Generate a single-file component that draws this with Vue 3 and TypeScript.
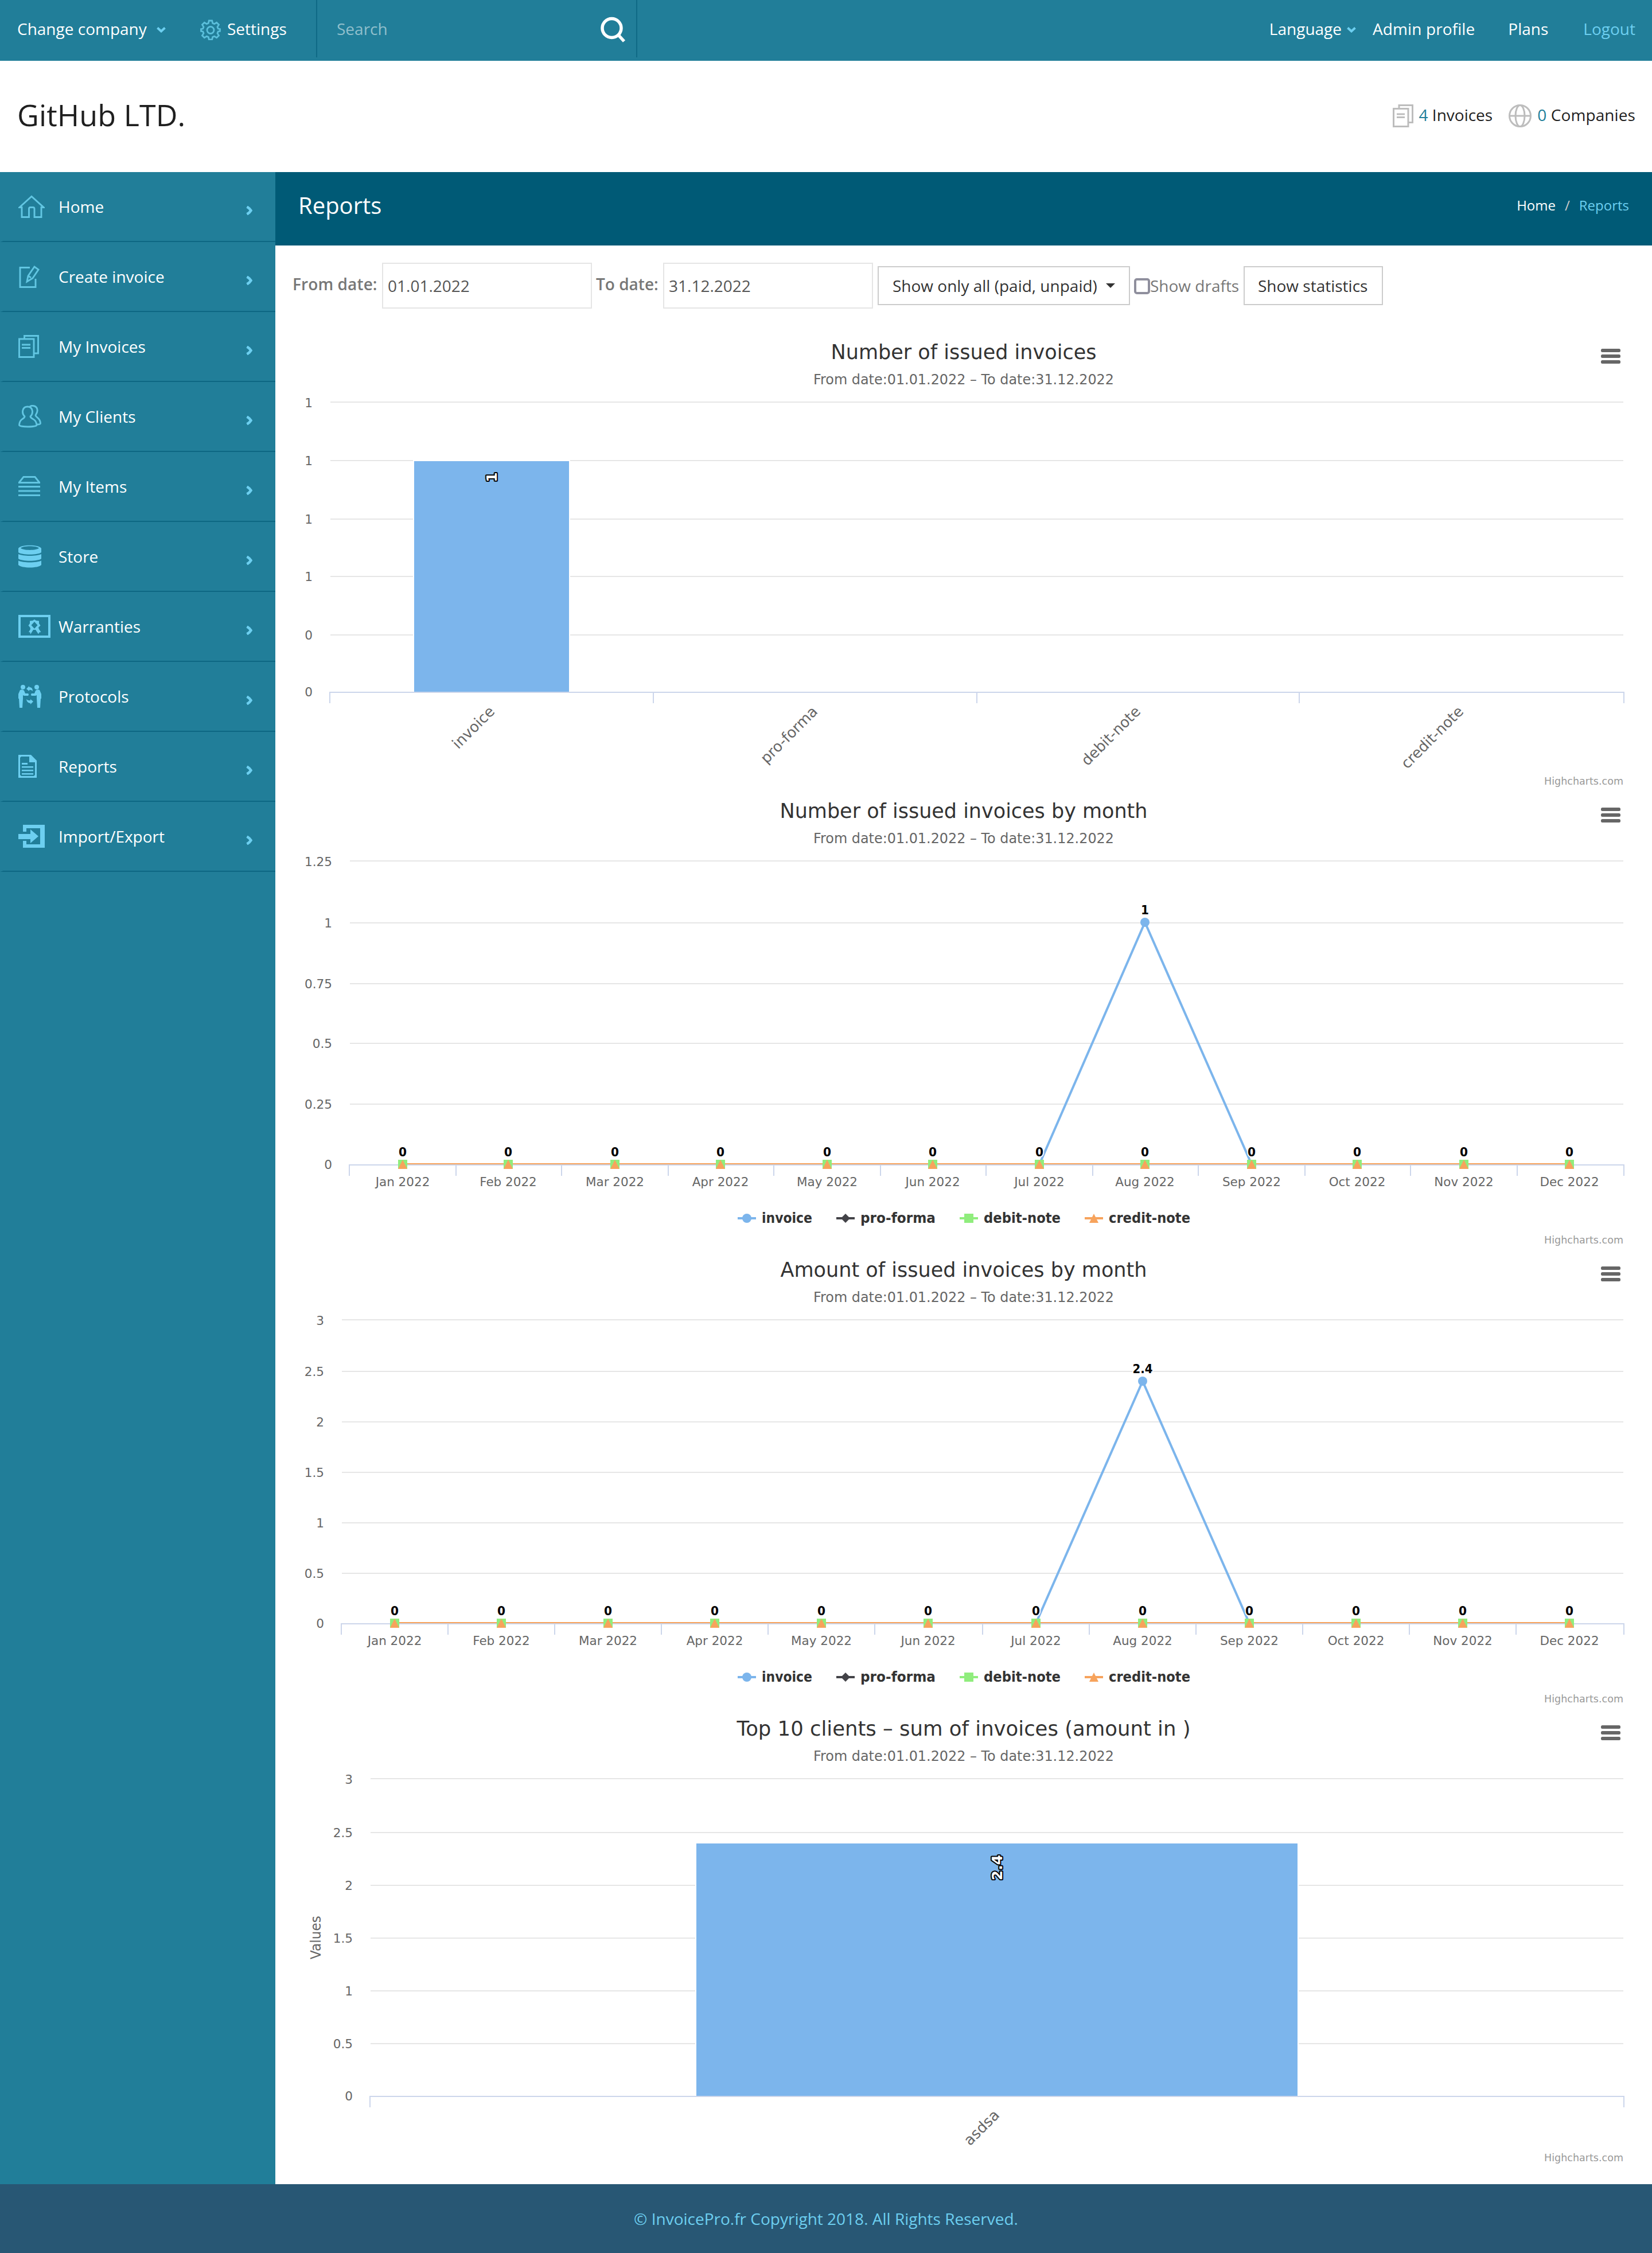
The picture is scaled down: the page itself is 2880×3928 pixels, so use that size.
<script setup lang="ts">
interface MenuItem { icon: string; label: string }
interface Tick { y: number; text: string }
interface Bar { x: number; y: number; w: number; h: number; label: string; lx: number; ly: number }
interface Category { x: number; y: number; text: string }
interface Chart {
  title: string
  titleWidth: number
  left: number
  bottom: number
  ticks: Tick[]
  xTicks: number[]
  kind: 'bar' | 'line'
  bar?: Bar
  categories?: Category[]
  points?: number[]
  peak?: string
  yTitle?: string
}

const menu: MenuItem[] = [
  { icon: 'home', label: 'Home' },
  { icon: 'create', label: 'Create invoice' },
  { icon: 'invoices', label: 'My Invoices' },
  { icon: 'clients', label: 'My Clients' },
  { icon: 'items', label: 'My Items' },
  { icon: 'store', label: 'Store' },
  { icon: 'warranties', label: 'Warranties' },
  { icon: 'protocols', label: 'Protocols' },
  { icon: 'reports', label: 'Reports' },
  { icon: 'import', label: 'Import/Export' },
]

const months = ['Jan', 'Feb', 'Mar', 'Apr', 'May', 'Jun', 'Jul', 'Aug', 'Sep', 'Oct', 'Nov', 'Dec'].map((m) => `${m} 2022`)
const PEAK_MONTH = 7
const PEAK_Y = 230
const RIGHT = 2320

const ticks = (ys: number[], labels: string[]): Tick[] => ys.map((y, i) => ({ y, text: labels[i] }))

// Month positions snap to whole units of a half-resolution grid
function monthPoints(left: number): number[] {
  const step = (RIGHT - left) / 24
  return months.map((_, i) => 2 * Math.floor(left / 2 + step * (i + 0.5)))
}
function monthTicks(left: number): number[] {
  const step = (RIGHT - left) / 24
  return Array.from({ length: 13 }, (_, i) => (i === 12 ? RIGHT + 1 : 2 * Math.round(left / 2 + step * i) - 1))
}

const charts: Chart[] = [
  {
    title: 'Number of issued invoices', titleWidth: 463, left: 66, bottom: 628, kind: 'bar',
    ticks: ticks([123, 225, 327, 427, 529, 629], ['1', '1', '1', '1', '0', '0']),
    xTicks: [65, 629, 1193, 1755, 2321],
    bar: { x: 211, y: 225, w: 272, h: 404, label: '1', lx: 356, ly: 254 },
    categories: [
      { x: 354, y: 664, text: 'invoice' },
      { x: 917, y: 664, text: 'pro-forma' },
      { x: 1480, y: 664, text: 'debit-note' },
      { x: 2043, y: 664, text: 'credit-note' },
    ],
  },
  {
    title: 'Number of issued invoices by month', titleWidth: 641, left: 100, bottom: 652, kind: 'line',
    ticks: ticks([123, 231, 337, 441, 547, 653], ['1.25', '1', '0.75', '0.5', '0.25', '0']),
    xTicks: monthTicks(100), points: monthPoints(100), peak: '1',
  },
  {
    title: 'Amount of issued invoices by month', titleWidth: 639, left: 86, bottom: 652, kind: 'line',
    ticks: ticks([123, 213, 301, 389, 477, 565, 653], ['3', '2.5', '2', '1.5', '1', '0.5', '0']),
    xTicks: monthTicks(86), points: monthPoints(86), peak: '2.4',
  },
  {
    title: 'Top 10 clients – sum of invoices (amount in )', titleWidth: 791, left: 136, bottom: 676, kind: 'bar',
    ticks: ticks([123, 217, 309, 401, 493, 585, 677], ['3', '2.5', '2', '1.5', '1', '0.5', '0']),
    xTicks: [135, 2321],
    bar: { x: 703, y: 235, w: 1050, h: 442, label: '2.4', lx: 1237, ly: 278 },
    categories: [{ x: 1234, y: 711, text: 'asdsa' }],
    yTitle: 'Values',
  },
]

const legend = [
  { x: 776, w: 88, text: 'invoice', color: '#7cb5ec', shape: 'circle' },
  { x: 948, w: 131, text: 'pro-forma', color: '#434348', shape: 'diamond' },
  { x: 1163, w: 134, text: 'debit-note', color: '#90ed7d', shape: 'square' },
  { x: 1381, w: 142, text: 'credit-note', color: '#f7a35c', shape: 'triangle' },
]

function invoicePath(c: Chart): string {
  return 'M' + c.points!.map((x, i) => `${x} ${i === PEAK_MONTH ? PEAK_Y : c.bottom}`).join('L')
}
</script>

<template>
  <div class="page">
    <header class="topbar">
      <div class="top-left">
        <span class="company">Change company</span>
        <svg class="chev" width="16" height="10" viewBox="0 0 16 10"><path d="M1.500 1.500L8 7.500L14.500 1.500" /></svg>
        <svg class="gear" width="36" height="36" viewBox="0 0 36 36">
          <path d="M15.300 2h5.400l1 4.400 3 1.300 4-2.500 3.800 3.800-2.500 4 1.300 3 3.200.7v3.600l-3.200.7-1.300 3 2.500 4-3.800 3.800-4-2.500-3 1.300-1 4.400h-5.400l-1-4.400-3-1.300-4 2.500L3.500 28l2.500-4-1.300-3L1.500 20.300v-3.600L4.700 16l1.300-3-2.500-4 3.800-3.800 4 2.500 3-1.300z" />
          <circle cx="18" cy="18.500" r="6" />
        </svg>
        <span class="settings">Settings</span>
        <div class="search">
          <span>Search</span>
          <svg width="44" height="46" viewBox="0 0 44 46"><circle cx="19.500" cy="20" r="16.500" /><path d="M31 32L41 43" /></svg>
        </div>
      </div>
      <nav class="top-right">
        <span>Language</span>
        <svg class="chev" width="16" height="10" viewBox="0 0 16 10"><path d="M1.500 1.500L8 7.500L14.500 1.500" /></svg>
        <span class="admin">Admin profile</span>
        <span class="plans">Plans</span>
        <span class="logout">Logout</span>
      </nav>
    </header>

    <section class="brand">
      <h1>GitHub LTD.</h1>
      <div class="counts">
        <svg width="36" height="40" viewBox="0 0 36 40">
          <path d="M11 6V1.500H34.500V31.500H28M1.500 7.500H27V38.500H1.500zM7 17H21M7 22.500H21" />
        </svg>
        <span class="inv"><b>4</b> Invoices</span>
        <svg width="40" height="40" viewBox="0 0 40 40">
          <circle cx="20" cy="20" r="18.500" /><ellipse cx="20" cy="20" rx="8" ry="18.500" /><path d="M1.500 20H38.500" />
        </svg>
        <span class="comp"><b>0</b> Companies</span>
      </div>
    </section>

    <div class="body">
      <aside class="sidebar">
        <div v-for="m in menu" :key="m.label" class="item">
          <span class="icon">
            <svg v-if="m.icon === 'home'" width="46" height="40" viewBox="0 0 46 40">
              <path d="M2 21L23 2L44 21H40V38H28V23.500Q28 21 25.500 21H21Q18.500 21 18.500 23.500V38H6V21z" transform="translate(0 .5)" />
            </svg>
            <svg v-else-if="m.icon === 'create'" width="38" height="40" viewBox="0 0 38 40">
              <path d="M20 4.500H3V38.500H30V24M15 29L17 19L28 3L35 8L25 23zM17 19L22 22" />
            </svg>
            <svg v-else-if="m.icon === 'invoices'" width="36" height="40" viewBox="0 0 36 40">
              <path d="M10.500 6V1.500H34.500V32H28M1.500 7H27V38.500H1.500zM6 17H21M6 22.500H21" />
            </svg>
            <svg v-else-if="m.icon === 'clients'" width="40" height="40" viewBox="0 0 40 40">
              <path d="M11 20C5 14 7 3 16 3S27 14 21 20C21 25 31 23 32 35C32 39 1.500 39 1.500 35C2 23 11 25 11 20zM20 3C23 0 32 1 33 8C34 13 31 15 30 18C30 22 38 22 38.500 32C38.500 34 36 34 33 34" />
            </svg>
            <svg v-else-if="m.icon === 'items'" width="38" height="40" viewBox="0 0 38 40">
              <path d="M1.500 13L9 3.500H29L36.500 13M0 13.500H38M0 20.500H38M0 28H38M0 35.500H38" />
            </svg>
            <svg v-else-if="m.icon === 'store'" class="fill" width="40" height="40" viewBox="0 0 40 40">
              <path fill-rule="evenodd" d="M0 6C4-1 36-1 40 6V13C34 18 6 18 0 13zM4 5.500C8 10 32 10 36 5.500C32 1 8 1 4 5.500z" />
              <path d="M0 16C8 20 32 20 40 16V24C34 29 6 29 0 24zM0 27.500C8 31.500 32 31.500 40 27.500V35C34 41 6 41 0 35z" />
            </svg>
            <svg v-else-if="m.icon === 'warranties'" class="fill" width="56" height="40" viewBox="0 0 56 40">
              <path fill-rule="evenodd" d="M0 0H56V40H0zM4 4V36H52V4z" />
              <path fill-rule="evenodd" d="M28 8L31 10L36 10.500L36 15L38.500 18.500L35 22L36 25L39.500 30L36.500 30.500L35 33.500L30 26H26L21 34L20.500 30.500L18 30L21 25L20.500 22L17.500 18.500L20 15V10.500L25 10zM28 12L22.500 18L28 24L33.500 18z" />
            </svg>
            <svg v-else-if="m.icon === 'protocols'" class="fill" width="40" height="40" viewBox="0 0 40 40">
              <circle cx="8" cy="4" r="4" /><circle cx="32" cy="4" r="4" />
              <path d="M3 9Q7 7 10 10L12 15H17Q19 17 17 19H10L8 18V24L7 40H2L1 24H0V16zM37 9Q33 7 30 10L28 15H23Q21 17 23 19H30L32 18V24L33 40H38L39 24H40V16z" />
              <path d="M14 7L19 2V4Q25 4 25 11Q22 8 19 9V11zM26 29L21 34V32Q15 32 14 25Q17 28 21 27V25z" />
            </svg>
            <svg v-else-if="m.icon === 'reports'" class="fill" width="32" height="40" viewBox="0 0 32 40">
              <path fill-rule="evenodd" d="M0 0H22L32 10V40H0zM5 3L3 5V35L5 37H27L29 35V13H19V3z" />
              <path d="M6 14H16V17H6zM6 20H26V22.500H6zM6 26H26V28.500H6zM6 32H26V34.500H6z" />
            </svg>
            <svg v-else class="fill" width="46" height="40" viewBox="0 0 46 40">
              <path d="M8 0H46V40H8V28H14V34H38V6H14V12H8zM0 16H21V8L35 20L21 32V25H0z" />
            </svg>
          </span>
          <span class="label">{{ m.label }}</span>
          <svg class="arrow" width="11" height="16" viewBox="0 0 11 16"><path d="M1.500 1.500Q6 4 8.500 8Q6 12 1.500 14.500" /></svg>
        </div>
      </aside>

      <main class="content">
        <div class="pagehead">
          <h2>Reports</h2>
          <div class="crumbs"><span>Home</span><i>/</i><em>Reports</em></div>
        </div>
        <div class="filters">
          <label class="from">From date:</label>
          <div class="field">01.01.2022</div>
          <label class="to">To date:</label>
          <div class="field">31.12.2022</div>
          <div class="btn select">Show only all (paid, unpaid)<span class="caret"></span></div>
          <span class="check"></span>
          <span class="drafts">Show drafts</span>
          <div class="btn stats">Show statistics</div>
        </div>

        <svg v-for="(c, ci) in charts" :key="ci" class="chart" width="2340" height="800" viewBox="0 0 2340 800">
          <clipPath :id="`plot${ci}`"><rect :x="c.left" y="100" :width="RIGHT - c.left" :height="c.bottom - 100" /></clipPath>
          <text class="title" x="1170" y="48" :textLength="c.titleWidth" lengthAdjust="spacingAndGlyphs">{{ c.title }}</text>
          <text class="subtitle" x="1170" y="92" textLength="524" lengthAdjust="spacingAndGlyphs">From date:01.01.2022 – To date:31.12.2022</text>
          <g class="burger">
            <rect v-for="y in [30, 40, 50]" :key="y" x="2281" :y="y" width="34" height="6" rx="2.500" />
          </g>

          <g v-for="(t, ti) in c.ticks" :key="ti">
            <rect v-if="ti < c.ticks.length - 1" class="grid" :x="c.left" :y="t.y - 1" :width="RIGHT - c.left" height="2" />
            <text class="ylabel" :x="c.left - 31" :y="t.y + (ti === 0 ? 9 : ti === c.ticks.length - 1 ? 7 : 8)">{{ t.text }}</text>
          </g>
          <text v-if="c.yTitle" class="ytitle" transform="translate(49 400) rotate(-90)" textLength="76" lengthAdjust="spacingAndGlyphs">{{ c.yTitle }}</text>

          <rect v-if="c.bar" class="bar" :x="c.bar.x" :y="c.bar.y" :width="c.bar.w" :height="c.bar.h" />

          <rect class="axis" :x="c.left - 2" :y="c.bottom" :width="RIGHT + 4 - c.left" height="2" />
          <rect v-for="x in c.xTicks" :key="x" class="axis" :x="x - 1" :y="c.bottom" width="2" height="20" />

          <template v-if="c.kind === 'bar'">
            <text class="barlabel" :transform="`translate(${c.bar!.lx} ${c.bar!.ly}) rotate(-90)`">{{ c.bar!.label }}</text>
            <text v-for="k in c.categories" :key="k.text" class="category" :transform="`translate(${k.x} ${k.y}) rotate(-45)`">{{ k.text }}</text>
          </template>

          <template v-else>
            <g :clip-path="`url(#plot${ci})`" class="lines">
              <path :d="invoicePath(c)" stroke="#7cb5ec" />
              <path :d="`M${c.points![0]} ${c.bottom}H${c.points![11]}`" stroke="#f7a35c" />
            </g>
            <circle :cx="c.points![PEAK_MONTH]" :cy="PEAK_Y" r="8" fill="#7cb5ec" />
            <g v-for="(x, i) in c.points" :key="x">
              <rect :x="x - 8" :y="c.bottom - 8" width="16" height="16" fill="#90ed7d" />
              <path :d="`M${x} ${c.bottom - 8}l8 16h-16z`" fill="#f7a35c" />
              <text class="point" :x="x" :y="c.bottom - 14" textLength="14" lengthAdjust="spacingAndGlyphs">0</text>
              <text class="xlabel" :x="x" :y="c.bottom + 38">{{ months[i] }}</text>
            </g>
            <text class="point" :x="c.points![PEAK_MONTH]" :y="PEAK_Y - 14" :textLength="c.peak === '1' ? 14 : 35" lengthAdjust="spacingAndGlyphs">{{ c.peak }}</text>
            <g v-for="l in legend" :key="l.text">
              <rect :x="l.x" y="744" width="32" height="4" :fill="l.color" />
              <circle v-if="l.shape === 'circle'" :cx="l.x + 16" cy="746" r="8" :fill="l.color" />
              <path v-else-if="l.shape === 'diamond'" :d="`M${l.x + 16} 738l8 8l-8 8l-8-8z`" :fill="l.color" />
              <rect v-else-if="l.shape === 'square'" :x="l.x + 8" y="738" width="16" height="16" :fill="l.color" />
              <path v-else :d="`M${l.x + 16} 738l8 16h-16z`" :fill="l.color" />
              <text class="legend" :x="l.x + 42" y="754" :textLength="l.w" lengthAdjust="spacingAndGlyphs">{{ l.text }}</text>
            </g>
          </template>
          <text class="credit" x="2320" y="790" textLength="138" lengthAdjust="spacingAndGlyphs">Highcharts.com</text>
        </svg>
      </main>
    </div>
    <footer>© InvoicePro.fr Copyright 2018. All Rights Reserved.</footer>
  </div>
</template>

<style>
body { margin: 0; background: #fff; }
</style>

<style scoped>
.page { width: 2880px; height: 3928px; display: flex; flex-direction: column; font-family: "Open Sans", "Noto Sans", sans-serif; font-size: 28px; line-height: 40px; white-space: nowrap; }
svg { display: block; flex: none; }
.topbar { height: 100px; padding-bottom: 6px; background: #217e99; color: #fff; display: flex; justify-content: space-between; flex: none; }
.top-left, .top-right { display: flex; align-items: center; }
.company { width: 243px; margin-left: 30px; }
.chev { fill: none; stroke: #6dcff0; stroke-width: 4; margin-top: 4px; }
.gear { margin-left: 60px; margin-top: 4px; fill: none; stroke: #5bbfdb; stroke-width: 2.800; }
.settings { width: 155px; margin-left: 11px; }
.search { width: 560px; height: 100px; padding: 0 18px 0 34px; border-left: 2px solid #0f6a86; border-right: 2px solid #0f6a86; box-sizing: border-box; display: flex; align-items: center; justify-content: space-between; color: #90bfcc; }
.search svg { fill: none; stroke: #fff; stroke-width: 5.500; margin-top: 4px; }
.top-right { padding-right: 29px; }
.top-right .chev { margin-left: 9px; }
.admin { margin-left: 29px; letter-spacing: 0.100px; }
.plans { margin-left: 58px; }
.logout { margin-left: 61px; color: #6dcff0; }

.brand { height: 188px; padding: 0 29px 6px 30px; display: flex; justify-content: space-between; align-items: center; color: #1f1f1f; flex: none; background: #fff; }
h1 { margin: 0; font-size: 52px; font-weight: 400; line-height: 70px; letter-spacing: 0.100px; }
.counts { display: flex; align-items: center; }
.counts svg { fill: none; stroke: #bdbdbd; stroke-width: 3; margin-top: 4px; }
.counts b { font-weight: 400; color: #217e99; }
.inv { margin: 0 28px 0 10px; }
.comp { margin-left: 10px; letter-spacing: 0.100px; }

.body { display: flex; flex: none; height: 3508px; }
.sidebar { width: 480px; background: #217e99; color: #fff; flex: none; }
.item { height: 120px; border-bottom: 2px solid #0d6783; border-left: 6px solid #217e99; padding: 0 40px 0 26px; display: flex; align-items: center; }
.icon { width: 70px; flex: none; }
.icon svg { fill: none; stroke: #62c6e2; stroke-width: 2.900; }
.icon svg.fill { fill: #6dcff0; stroke: none; }
.label { flex: 1; }
.arrow { fill: none; stroke: #6dcff0; stroke-width: 4.500; margin-top: 14px; }

.content { width: 2400px; background: #fff; }
.pagehead { height: 116px; padding: 0 40px 12px 40px; background: #005a76; color: #fff; display: flex; justify-content: space-between; align-items: center; }
h2 { margin: 0; font-size: 40px; font-weight: 400; line-height: 56px; }
.crumbs { font-size: 24px; display: flex; }
.crumbs i { font-style: normal; color: #ccc; margin: 0 16px; }
.crumbs em { font-style: normal; color: #6dcff0; }

.filters { height: 150px; padding: 30px 0 0 30px; box-sizing: border-box; display: flex; align-items: flex-start; color: #777; }
.filters > * { flex: none; box-sizing: border-box; }
.filters label { font-weight: 600; line-height: 74px; }
.from { width: 156px; letter-spacing: 0.100px; }
.to { width: 117px; margin-left: 7px; }
.field { width: 366px; height: 80px; border: 2px solid #e5e5e5; padding-left: 8px; line-height: 76px; color: #555; }
.btn { height: 68px; margin-top: 6px; border: 2px solid #ccc; line-height: 64px; color: #333; padding-left: 24px; }
.select { width: 440px; margin-left: 8px; display: flex; align-items: center; }
.caret { border: 8px solid transparent; border-top-color: #333; border-bottom: 0; margin-left: 15px; }
.check { width: 28px; height: 28px; border: 4px solid #8f8f9d; border-radius: 5px; margin: 27px 0 0 7px; }
.drafts { width: 163px; line-height: 80px; }
.stats { width: 243px; padding-left: 23px; }

.chart { margin-left: 30px; font-family: "DejaVu Sans", sans-serif; }
.title { font-size: 36px; fill: #333; text-anchor: middle; }
.subtitle { font-size: 24px; fill: #666; text-anchor: middle; }
.burger { fill: #666; }
.grid { fill: #e6e6e6; }
.axis { fill: #ccd6eb; }
.ylabel { font-size: 21.600px; fill: #666; text-anchor: end; }
.xlabel { font-size: 21.500px; fill: #666; text-anchor: middle; }
.ytitle { font-size: 24px; fill: #666; text-anchor: middle; }
.bar { fill: #7cb5ec; stroke: #fff; stroke-width: 2; }
.barlabel { font-size: 25px; font-weight: 700; fill: #fff; stroke: #000; stroke-width: 4; stroke-linejoin: round; paint-order: stroke; text-anchor: middle; }
.category { font-size: 25.800px; fill: #666; text-anchor: end; }
.lines { fill: none; stroke-width: 4; stroke-linejoin: round; }
.point { font-size: 22px; font-weight: 700; fill: #000; stroke: #fff; stroke-width: 4; stroke-linejoin: round; paint-order: stroke; text-anchor: middle; }
.legend { font-size: 24px; font-weight: 700; fill: #333; }
.credit { font-size: 18px; fill: #999; text-anchor: end; }

footer { height: 120px; line-height: 121px; text-align: center; background: #285774; color: #6dcff0; flex: none; }
</style>
